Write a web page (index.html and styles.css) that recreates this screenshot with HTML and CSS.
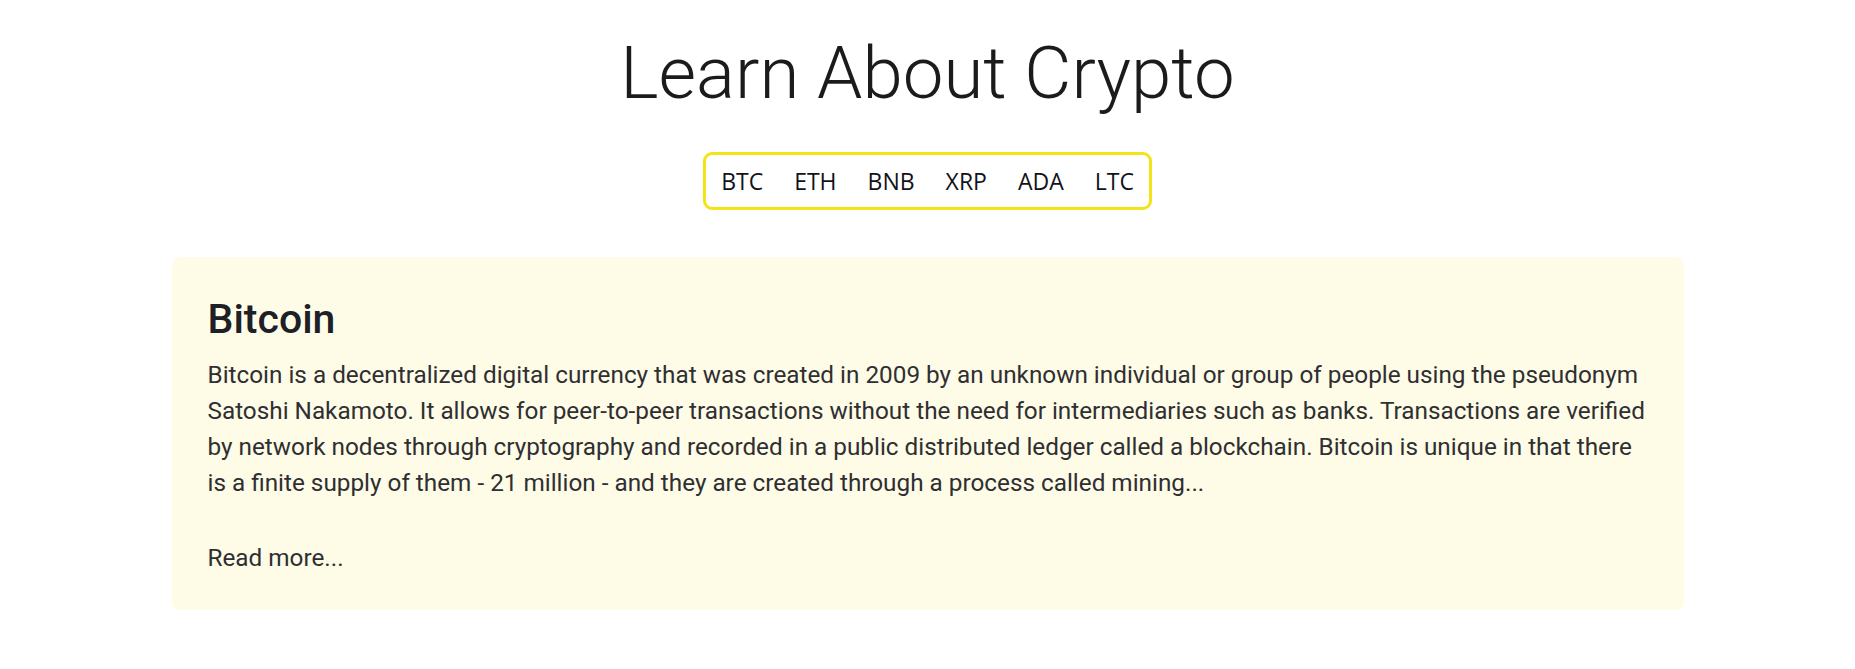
FILE: index.html
```html
<!DOCTYPE html>
<html lang="en">
<head>
<meta charset="utf-8">
<title>Learn About Crypto</title>
<link rel="stylesheet" href="styles.css">
</head>
<body>
<main class="page">
  <h1 class="title">Learn About Crypto</h1>
  <nav class="tabs">
    <button class="tab">BTC</button>
    <button class="tab">ETH</button>
    <button class="tab">BNB</button>
    <button class="tab">XRP</button>
    <button class="tab">ADA</button>
    <button class="tab">LTC</button>
  </nav>
  <section class="card">
    <h2 class="card-title">Bitcoin</h2>
    <p class="card-text">Bitcoin is a decentralized digital currency that was created in 2009 by an unknown individual or group of people using the pseudonym Satoshi Nakamoto. It allows for peer-to-peer transactions without the need for intermediaries such as banks. Transactions are verified by network nodes through cryptography and recorded in a public distributed ledger called a blockchain. Bitcoin is unique in that there is a finite supply of them - 21 million - and they are created through a process called mining...</p>
    <p class="card-more">Read more...</p>
  </section>
</main>
</body>
</html>
```
FILE: styles.css
```css
* { box-sizing: border-box; }
html, body { margin: 0; padding: 0; background: #ffffff; }
body {
  font-family: Roboto, "Open Sans", sans-serif;
  color: #1e1e20;
}
.page {
  display: flex;
  flex-direction: column;
  align-items: center;
  padding-top: 38px;
}
.title {
  margin: 0;
  font-size: 72.6px;
  font-weight: 300;
  line-height: 72px;
  color: #1b1b1d;
}
.tabs {
  display: flex;
  margin-top: 42px;
  height: 58px;
  align-items: center;
  border: 3px solid #f3e41a;
  border-radius: 9px;
  padding: 0;
}
.tab {
  font-family: "Open Sans", sans-serif;
  font-size: 23px;
  color: #111318;
  background: transparent;
  border: 0;
  padding: 0 15.5px;
  margin: 0;
  line-height: 30px;
  cursor: pointer;
}
.card {
  align-self: stretch;
  max-width: 1512px;
  width: 1512px;
  margin: 47px auto 0;
  background: #fefce6;
  border-radius: 8px;
  padding: 38px 36px 34px;
}
.card-title {
  margin: 0;
  font-size: 41px;
  font-weight: 500;
  line-height: 48px;
  color: #1d2027;
}
.card-text {
  margin: 14px 0 0;
  font-size: 24.3px;
  line-height: 36px;
  color: #2f2f33;
}
.card-more {
  margin: 39px 0 0;
  font-size: 24.3px;
  line-height: 36px;
  color: #2f2f33;
}
```
